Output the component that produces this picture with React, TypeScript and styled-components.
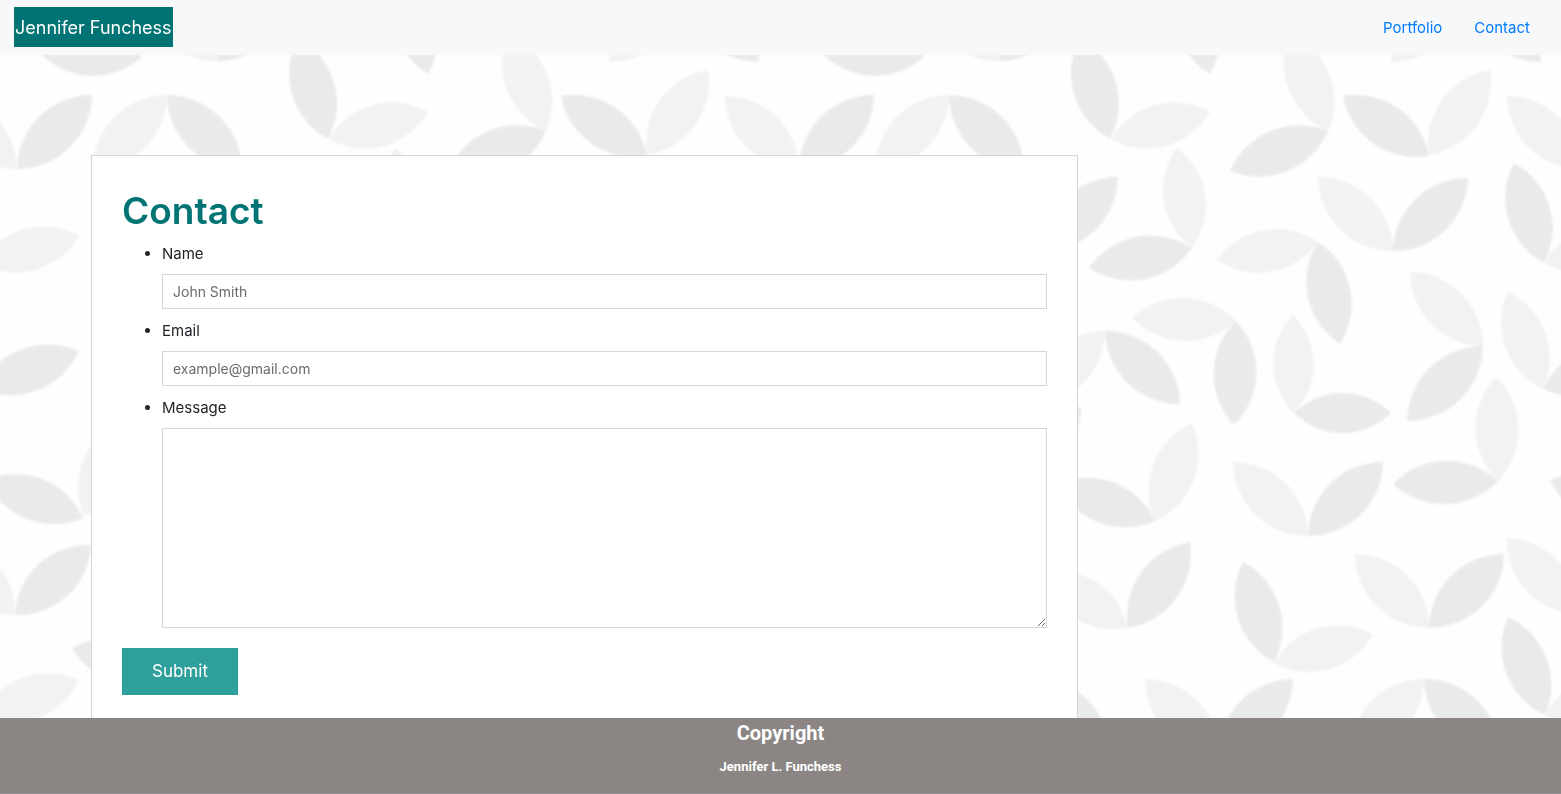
import React from "react";
import styled, { createGlobalStyle } from "styled-components";

const GlobalStyle = createGlobalStyle`
  *, *::before, *::after { box-sizing: border-box; }
  body {
    margin: 0;
    background: #fefefe;
    color: #212529;
    font-family: Inter, "Liberation Sans", sans-serif;
    font-size: 15px;
    line-height: 24px;
  }
`;

const Backdrop = styled.svg`
  position: fixed;
  inset: 0;
  width: 100%;
  height: 100%;
  z-index: -1;
`;

const Nav = styled.nav`
  display: flex;
  align-items: center;
  justify-content: space-between;
  padding: 7px 15px 8px 14px;
  background: #f7f8fa;
`;

const Brand = styled.a`
  padding: 6px 1px 4px;
  background: #007474;
  color: #fff;
  font-size: 18px;
  line-height: 30px;
  text-decoration: none;
`;

const NavList = styled.ul`
  display: flex;
  margin: 0;
  padding: 0;
  list-style: none;
`;

const NavLink = styled.a`
  display: block;
  padding: 9px 16px 7px;
  color: #007bff;
  text-decoration: none;
`;

const Card = styled.main`
  max-width: 987px;
  margin: 100px 30px 0 91px;
  padding: 30px 30px 54px;
  border: 1px solid #d5d7d7;
  background: #fff;
`;

const Title = styled.h1`
  margin: 0 0 6px;
  color: #007474;
  font-size: 37px;
  font-weight: 600;
  line-height: 50px;
`;

const Fields = styled.ul`
  margin: 0 0 20px;
  padding-left: 40px;
`;

const Field = styled.li`
  & + & { margin-top: 10px; }
`;

const Label = styled.label`
  display: block;
  margin-bottom: 8px;
`;

const TextInput = styled.input`
  display: block;
  width: 100%;
  height: 35px;
  padding: 0 10px;
  border: 1px solid #d5d7d7;
  border-radius: 0;
  background: #fff;
  font-family: inherit;
  font-size: 14px;
  &::placeholder { color: #6b6b6b; }
`;

const MessageBox = styled.textarea`
  display: block;
  width: 100%;
  height: 200px;
  padding: 10px;
  border: 1px solid #d5d7d7;
  background: #fff;
  font-family: inherit;
  font-size: 14px;
`;

const SubmitButton = styled.button`
  display: block;
  padding: 10px 30px;
  border: 0;
  background: #2e9f9a;
  color: #fff;
  font-family: inherit;
  font-size: 17px;
  line-height: 27px;
`;

const Footer = styled.footer`
  position: fixed;
  right: 0;
  bottom: 0;
  left: 0;
  height: 76px;
  border-bottom: 1px solid #969190;
  background: #8b8684;
  color: #fff;
  font-family: Roboto, "Liberation Sans", sans-serif;
  font-weight: 700;
  text-align: center;
`;

const FooterTitle = styled.h2`
  margin: 0 0 8px;
  font-size: 20px;
  line-height: 30px;
`;

const FooterName = styled.p`
  margin: 0;
  font-size: 13px;
  line-height: 22px;
`;

const TILE = 782;
type Leaf = [number, number, number, number];

/* Each leaf runs from one tip to the other, in tile coordinates. */
const darkLeaves: Leaf[] = [
  [39, 52, 142, 57], [217, 61, 291, -12], [298, 38, 328, 139], [402, -27, 428, 74],
  [546, 131, 448, 171], [561, 96, 647, 156], [759, 62, 684, -12], [17, 169, 92, 95],
  [167, 95, 242, 170], [410, 248, 307, 268], [336, 177, 261, 251], [611, 251, 686, 178],
  [536, 242, 558, 344], [732, 163, 762, 263], [454, 321, 452, 425], [323, 331, 398, 404],
  [512, 413, 609, 413], [701, 346, 625, 421], [761, 389, 861, 351], [299, 407, 225, 481],
  [373, 521, 276, 484], [768, 480, 865, 518], [526, 536, 601, 462], [611, 484, 716, 481],
  [408, 542, 346, 628], [461, 562, 492, 662], [647, 628, 722, 554], [15, 615, 91, 545],
  [726, 617, 763, 715], [72, 648, 172, 675], [511, 679, 437, 753], [642, 679, 718, 753],
  [254, 679, 328, 753],
];

const lightLeaves: Leaf[] = [
  [217, 61, 142, -12], [329, 139, 428, 112], [508, 33, 546, 131], [647, 155, 708, 70],
  [609, 62, 684, -12], [725, 96, 799, 169], [167, 95, 93, 169], [395, 148, 410, 248],
  [536, 177, 611, 251], [435, 260, 536, 242], [762, 263, 861, 236], [350, 318, 454, 321],
  [323, 331, 248, 405], [511, 315, 512, 413], [628, 272, 701, 346], [726, 292, 761, 389],
  [410, 423, 373, 521], [866, 516, 904, 420], [451, 462, 526, 536], [714, 377, 716, 481],
  [346, 628, 260, 572], [492, 663, 591, 634], [573, 554, 647, 628], [725, 538, 797, 615],
  [763, 716, 861, 680], [363, 679, 437, 753], [642, 679, 568, 753],
];

const leafPath = ([x1, y1, x2, y2]: Leaf) => {
  const radius = Math.hypot(x2 - x1, y2 - y1) * 0.71;
  return `M${x1} ${y1}A${radius} ${radius} 0 0 1 ${x2} ${y2}A${radius} ${radius} 0 0 1 ${x1} ${y1}Z`;
};

function LeafBackdrop() {
  return (
    <Backdrop aria-hidden="true">
      <defs>
        <filter id="soften" x="-5%" y="-5%" width="110%" height="110%">
          <feGaussianBlur stdDeviation="1.2" />
        </filter>
        <g id="leaves" filter="url(#soften)">
          <path d={lightLeaves.map(leafPath).join("")} fill="#f2f2f2" />
          <path d={darkLeaves.map(leafPath).join("")} fill="#e8ebea" />
        </g>
        <pattern id="leafTile" width={TILE} height="1000" patternUnits="userSpaceOnUse">
          <use href="#leaves" />
          <use href="#leaves" x={-TILE} />
        </pattern>
      </defs>
      <rect width="100%" height="100%" fill="url(#leafTile)" />
    </Backdrop>
  );
}

export default function App() {
  return (
    <>
      <GlobalStyle />
      <LeafBackdrop />
      <Nav>
        <Brand href="#">Jennifer Funchess</Brand>
        <NavList>
          <li><NavLink href="#portfolio">Portfolio</NavLink></li>
          <li><NavLink href="#contact">Contact</NavLink></li>
        </NavList>
      </Nav>
      <Card>
        <Title>Contact</Title>
        <form onSubmit={(event) => event.preventDefault()}>
          <Fields>
            <Field>
              <Label htmlFor="name">Name</Label>
              <TextInput id="name" type="text" placeholder="John Smith" />
            </Field>
            <Field>
              <Label htmlFor="email">Email</Label>
              <TextInput id="email" type="email" placeholder="example@gmail.com" />
            </Field>
            <Field>
              <Label htmlFor="message">Message</Label>
              <MessageBox id="message" />
            </Field>
          </Fields>
          <SubmitButton type="submit">Submit</SubmitButton>
        </form>
      </Card>
      <Footer>
        <FooterTitle>Copyright</FooterTitle>
        <FooterName>Jennifer L. Funchess</FooterName>
      </Footer>
    </>
  );
}
